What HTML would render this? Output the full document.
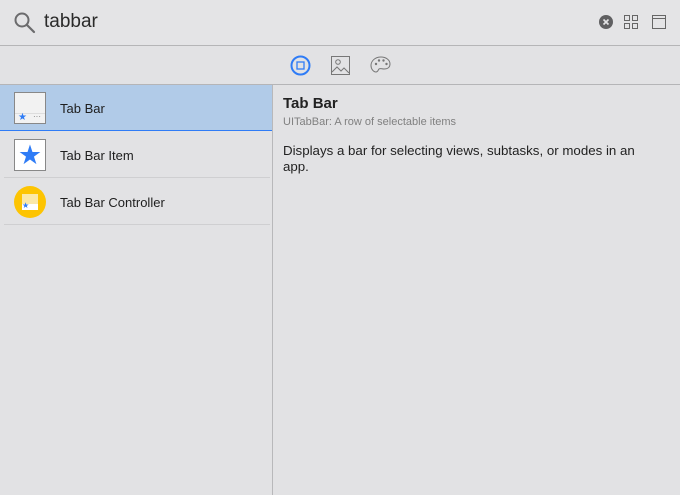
<!DOCTYPE html>
<html><head><style>
body{margin:0;width:680px;height:495px;background:#e2e2e4;font-family:"Liberation Sans",sans-serif;position:relative;overflow:hidden}
.a{position:absolute}
.row{position:absolute;left:0;width:272px;height:46px}
.lbl{position:absolute;left:60px;top:16px;font-size:13px;color:#1e1e1e}
.sep{position:absolute;left:4px;right:2px;bottom:0;height:1px;background:#cfcfd1}
</style></head><body>
<div class="a" style="left:0;top:0;width:680px;height:45px;background:#e4e4e6;border-bottom:1px solid #b5b5b7"></div>
<svg class="a" style="left:13px;top:11px" width="24" height="24"><circle cx="9" cy="9" r="6.5" fill="none" stroke="#6b6b6d" stroke-width="2"/><line x1="14" y1="14" x2="21" y2="21" stroke="#6b6b6d" stroke-width="2.2" stroke-linecap="round"/></svg>
<div class="a" style="left:44px;top:11px;font-size:19px;color:#2a2a2a">tabbar</div>
<svg class="a" style="left:598px;top:14px" width="16" height="16"><circle cx="8" cy="8" r="7" fill="#606062"/><path d="M5.5 5.5L10.5 10.5M10.5 5.5L5.5 10.5" stroke="#e4e4e6" stroke-width="1.6"/></svg>
<svg class="a" style="left:623px;top:14px" width="16" height="16"><g fill="none" stroke="#666" stroke-width="1"><rect x="1.5" y="1.5" width="5" height="5"/><rect x="9.5" y="1.5" width="5" height="5"/><rect x="1.5" y="9.5" width="5" height="5"/><rect x="9.5" y="9.5" width="5" height="5"/></g></svg>
<svg class="a" style="left:651px;top:14px" width="16" height="16"><rect x="1.5" y="1.5" width="13" height="13" fill="none" stroke="#666"/><line x1="1.5" y1="4.5" x2="14.5" y2="4.5" stroke="#666"/></svg>
<div class="a" style="left:0;top:46px;width:680px;height:38px;border-bottom:1px solid #b5b5b7"></div>
<svg class="a" style="left:289px;top:54px" width="24" height="24"><circle cx="11.5" cy="11.5" r="9" fill="none" stroke="#2f7cf6" stroke-width="2"/><rect x="8" y="8" width="7" height="7" fill="none" stroke="#2f7cf6" stroke-width="1.3"/></svg>
<svg class="a" style="left:330px;top:55px" width="22" height="22"><rect x="1.5" y="1.5" width="18" height="18" fill="none" stroke="#777" stroke-width="1"/><circle cx="8" cy="7" r="2.3" fill="none" stroke="#777"/><path d="M2 17L7 12L11 16L14 13L19 18" fill="none" stroke="#777"/></svg>
<svg class="a" style="left:370px;top:55px" width="22" height="20"><path d="M11 2C5 2 1 6 1 10.5 1 14 3.5 17 6 17 8 17 8 15 9 14 10 13 12 14 14 14 18 14 20 12 20 9 20 5 16 2 11 2Z" fill="none" stroke="#777"/><circle cx="6" cy="9" r="1.2" fill="#777"/><circle cx="9" cy="5.5" r="1.2" fill="#777"/><circle cx="13.5" cy="5.5" r="1.2" fill="#777"/><circle cx="16.5" cy="9" r="1.2" fill="#777"/></svg>
<div class="a" style="left:272px;top:85px;width:1px;height:410px;background:#b8b8ba"></div>
<div class="row" style="top:85px;background:#b1cbe8;border-bottom:1px solid #2f7cf6;height:45px">
<div class="a" style="left:14px;top:7px;width:30px;height:30px;background:#f2f2f2;border:1px solid #888"></div>
<div class="a" style="left:15px;top:28px;width:30px;height:1px;background:#ddd"></div>
<div class="a" style="left:18px;top:27px;font-size:10px;color:#2f7cf6">★</div>
<div class="a" style="left:33px;top:27px;font-size:8px;color:#777">···</div>
<div class="lbl">Tab Bar</div></div>
<div class="row" style="top:132px">
<div class="a" style="left:14px;top:7px;width:30px;height:30px;background:#fff;border:1px solid #888;color:#2f7cf6;font-size:27px;line-height:30px;text-align:center">★</div>
<div class="lbl">Tab Bar Item</div><div class="sep"></div></div>
<div class="row" style="top:179px">
<div class="a" style="left:14px;top:7px;width:32px;height:32px;border-radius:50%;background:#fdc402"></div>
<div class="a" style="left:22px;top:15px;width:16px;height:16px;background:#fbe8a8"></div>
<div class="a" style="left:22px;top:25px;width:16px;height:6px;background:#fff"></div>
<div class="a" style="left:22px;top:22px;font-size:8px;color:#2f7cf6">★</div>
<div class="lbl">Tab Bar Controller</div><div class="sep"></div></div>
<div class="a" style="left:283px;top:95px;font-size:15px;font-weight:bold;color:#222">Tab Bar</div>
<div class="a" style="left:283px;top:116px;font-size:11px;color:#808080">UITabBar: A row of selectable items</div>
<div class="a" style="left:283px;top:143px;width:370px;font-size:13.3px;line-height:16px;color:#222">Displays a bar for selecting views, subtasks, or modes in an app.</div>
</body></html>
